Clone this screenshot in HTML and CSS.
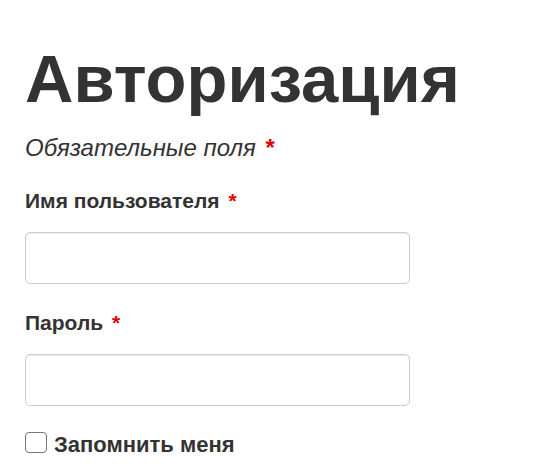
FILE: index.html
```html
<!DOCTYPE html>
<html lang="ru">
<head>
    <meta charset="UTF-8">
    <meta name="viewport" content="width=device-width, initial-scale=1.0">
    <title>Авторизация</title>
    <link rel="stylesheet" href="styles.css">
</head>
<body>

    <div class="login">
        <h1>Авторизация</h1>
        <p class="required-note">Обязательные поля <span class="star">*</span></p>

        <form class="login-form">
            <div class="field">
                <label for="username">Имя пользователя <span class="star">*</span></label>
                <input type="text" id="username">
            </div>

            <div class="field">
                <label for="password">Пароль <span class="star">*</span></label>
                <input type="password" id="password">
            </div>

            <div class="remember">
                <input type="checkbox" id="remember">
                <label for="remember">Запомнить меня</label>
            </div>
        </form>
    </div>

</body>
</html>
```

FILE: styles.css
```css
:root {
    --textColor: #333333;
    --starColor: #e00000;
    --mainFont: "Liberation Sans", Arial, sans-serif;
}
body {
    margin: 0;
    padding: 0;
    background-color: #ffffff;
    color: var(--textColor);
    font-family: var(--mainFont);
}
.login {
    padding: 42px 25px 0 25px;
}
h1 {
    font-size: 67px;
    font-weight: bold;
    line-height: 74px;
    margin: 0;
}
.required-note {
    font-style: italic;
    font-size: 24px;
    line-height: 28px;
    margin: 18px 0 0 0;
}
.star {
    color: var(--starColor);
    font-style: normal;
    font-weight: bold;
    margin-left: 3px;
}
.field {
    margin-top: 27px;
}
.field label {
    display: block;
    font-size: 21px;
    line-height: 24px;
    font-weight: bold;
    margin-bottom: 19px;
}
.field input {
    display: block;
    box-sizing: border-box;
    width: 385px;
    height: 52px;
    border: 1px solid #cccccc;
    border-radius: 5px;
    box-shadow: inset 0 1px 1px rgba(0, 0, 0, 0.075);
    padding: 6px 12px;
    font-size: 16px;
}
.remember {
    display: flex;
    align-items: flex-end;
    margin-top: 26px;
}
.remember input {
    appearance: none;
    box-sizing: border-box;
    width: 22px;
    height: 21px;
    border: 1px solid #767676;
    border-radius: 4px;
    background-color: #ffffff;
    margin: 0 7px 0 0;
}
.remember label {
    font-size: 22px;
    line-height: 16px;
    font-weight: bold;
}
```
